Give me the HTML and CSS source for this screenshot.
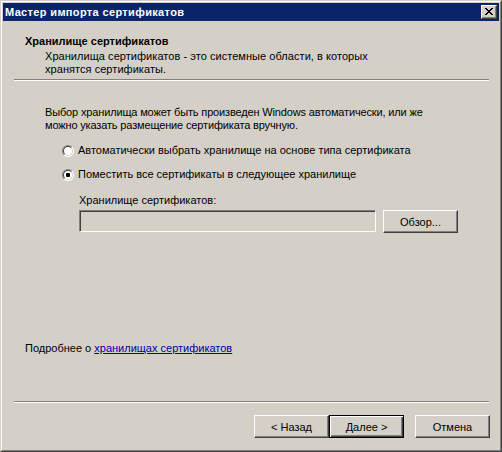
FILE: index.html
```html
<!DOCTYPE html>
<html lang="ru">
<head>
<meta charset="utf-8">
<title>Мастер импорта сертификатов</title>
<link rel="stylesheet" href="styles.css">
</head>
<body>
<div class="window">
  <div class="frame">
    <div class="titlebar">
      <span class="title">Мастер импорта сертификатов</span>
      <span class="close-btn"><svg width="8" height="7" viewBox="0 0 8 7"><path d="M0 0h2v1h1v1h2v-1h1v-1h2v1h-1v1h-1v1h-1v1h1v1h1v1h1v1h-2v-1h-1v-1h-2v1h-1v1h-2v-1h1v-1h1v-1h1v-1h-1v-1h-1v-1h-1z" fill="#000"/></svg></span>
    </div>
    <div class="header">
      <div class="h-title">Хранилище сертификатов</div>
      <div class="h-sub">Хранилища сертификатов - это системные области, в которых<br>хранятся сертификаты.</div>
    </div>
    <div class="sep"></div>
    <div class="content">
      <div class="intro">Выбор хранилища может быть произведен Windows автоматически, или же<br>можно указать размещение сертификата вручную.</div>
      <div class="radio-row"><span class="radio"></span><span>Автоматически выбрать хранилище на основе типа сертификата</span></div>
      <div class="radio-row"><span class="radio checked"></span><span>Поместить все сертификаты в следующее хранилище</span></div>
      <div class="store">
        <div class="store-label">Хранилище сертификатов:</div>
        <div class="store-row">
          <div class="input"></div>
          <button class="btn">Обзор...</button>
        </div>
      </div>
      <div class="more">Подробнее о <a class="link" href="#">хранилищах сертификатов</a></div>
    </div>
    <div class="sep"></div>
    <div class="footer">
      <button class="btn">&lt; Назад</button>
      <button class="btn default">Далее &gt;</button>
      <button class="btn cancel">Отмена</button>
    </div>
  </div>
</div>
</body>
</html>
```

FILE: styles.css
```css
html, body {
  margin: 0;
  padding: 0;
  background: #d4d0c8;
}

body {
  font-family: "Liberation Sans", Arial, sans-serif;
  font-size: 11px;
  line-height: 13px;
  color: #000;
}

.window {
  width: 502px;
  height: 452px;
  box-sizing: border-box;
  border: 1px solid;
  border-color: #d4d0c8 #404040 #404040 #d4d0c8;
  background: #d4d0c8;
}

.frame {
  height: 100%;
  box-sizing: border-box;
  border: 1px solid;
  border-color: #ffffff #808080 #808080 #ffffff;
  padding: 1px;
  display: flex;
  flex-direction: column;
}

.titlebar {
  height: 18px;
  background: #0a246a;
  display: flex;
  align-items: center;
  justify-content: space-between;
  padding: 0 2px 0 2px;
  flex: none;
}

.title {
  color: #fff;
  font-weight: bold;
  font-size: 11px;
  letter-spacing: 0.35px;
  white-space: nowrap;
}

.close-btn {
  width: 16px;
  height: 14px;
  box-sizing: border-box;
  background: #d4d0c8;
  border: 1px solid;
  border-color: #ffffff #404040 #404040 #ffffff;
  box-shadow: inset -1px -1px 0 #808080;
  display: flex;
  align-items: center;
  justify-content: center;
  padding: 0 1px 1px 0;
}

.close-btn svg {
  display: block;
}

.header {
  padding: 14px 0 0 22px;
  height: 58px;
  box-sizing: border-box;
  flex: none;
}

.h-title {
  font-weight: bold;
  white-space: nowrap;
}

.h-sub {
  margin: 2px 0 0 20px;
  letter-spacing: 0.05px;
  white-space: nowrap;
}

.sep {
  height: 0;
  border-top: 1px solid #808080;
  border-bottom: 1px solid #ffffff;
  margin: 0 10px 0 11px;
  flex: none;
}

.content {
  flex: 1;
  padding: 25px 0 0 42px;
  display: flex;
  flex-direction: column;
}

.intro {
  letter-spacing: -0.15px;
  white-space: nowrap;
}

.radio-row {
  display: flex;
  align-items: center;
  gap: 4px;
  margin-left: 17px;
  height: 13px;
  white-space: nowrap;
}

.intro + .radio-row {
  margin-top: 12px;
}

.radio-row + .radio-row {
  margin-top: 11px;
}

.radio {
  width: 12px;
  height: 12px;
  box-sizing: border-box;
  border-radius: 50%;
  border: 1px solid;
  border-color: #808080 #ffffff #ffffff #808080;
  background: #fff;
  position: relative;
  flex: none;
}

.radio::before {
  content: "";
  position: absolute;
  inset: 0;
  border-radius: 50%;
  border: 1px solid;
  border-color: #404040 #d4d0c8 #d4d0c8 #404040;
}

.radio.checked::after {
  content: "";
  position: absolute;
  left: 3px;
  top: 3px;
  width: 4px;
  height: 4px;
  border-radius: 1px;
  background: #000;
}

.store {
  margin: 13px 0 0 34px;
}

.store-label {
  white-space: nowrap;
}

.store-row {
  display: flex;
  gap: 7px;
  margin-top: 3px;
}

.input {
  width: 297px;
  height: 22px;
  box-sizing: border-box;
  border: 1px solid;
  border-color: #808080 #ffffff #ffffff #808080;
  background: #d4d0c8;
  box-shadow: inset 1px 1px 0 #404040, inset -1px -1px 0 #d4d0c8;
}

.btn {
  width: 75px;
  height: 23px;
  box-sizing: border-box;
  font-family: "Liberation Sans", Arial, sans-serif;
  font-size: 11px;
  color: #000;
  background: #d4d0c8;
  border: 1px solid;
  border-color: #ffffff #404040 #404040 #ffffff;
  box-shadow: inset -1px -1px 0 #808080;
  padding: 0;
  margin: 0;
}

.btn.default {
  border-color: #000;
  box-shadow: inset 1px 1px 0 #ffffff, inset -1px -1px 0 #404040, inset -2px -2px 0 #808080;
}

.more {
  margin: auto 0 0 -20px;
  padding-bottom: 46px;
  white-space: nowrap;
}

.link {
  color: #0000a0;
  text-decoration: underline;
}

.footer {
  height: 46px;
  box-sizing: border-box;
  padding: 12px 9px 0 0;
  display: flex;
  justify-content: flex-end;
  flex: none;
}

.footer .cancel {
  margin-left: 11px;
}
```
